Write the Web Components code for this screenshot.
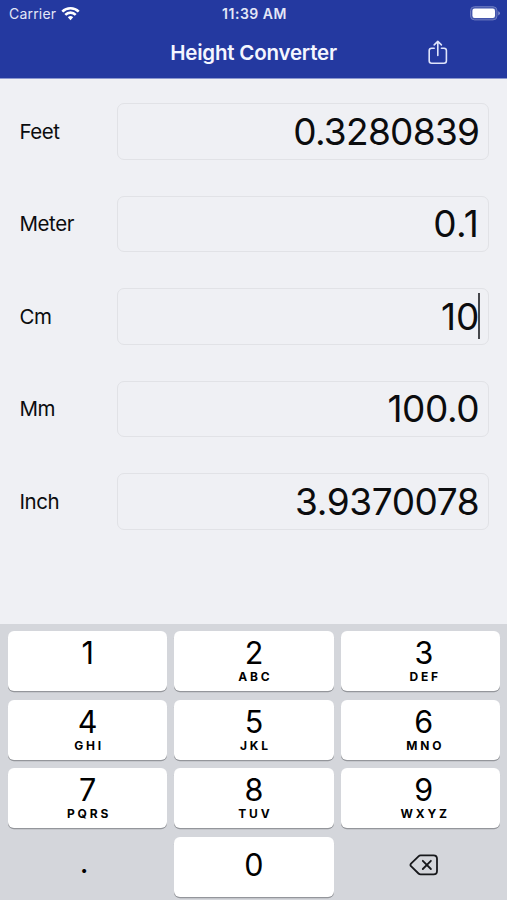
<!DOCTYPE html>
<html lang="en">
<head>
<meta charset="utf-8">
<title>Height Converter</title>
<style>
  body {
    margin: 0;
    font-family: Inter, "Liberation Sans", sans-serif;
    color: #0b0c0e;
  }
</style>
</head>
<body>
<converter-app></converter-app>

<script>
class StatusBar extends HTMLElement {
  constructor() {
    super();
    this.attachShadow({ mode: "open" });
    this.shadowRoot.innerHTML = /*html*/ `
      <style>
        :host {
          display: grid;
          grid-template-columns: 1fr auto 1fr;
          align-items: center;
          height: 27px;
          padding: 0 7px 0 9px;
          font-size: 14px;
          color: #e3e7f7;
        }
        .carrier {
          display: flex;
          align-items: center;
          gap: 5px;
          letter-spacing: 0.2px;
        }
        .time {
          font-size: 14px;
          font-weight: 600;
          letter-spacing: 0.5px;
        }
        .battery { justify-self: end; }
        svg { display: block; }
      </style>
      <div class="carrier">
        <span>Carrier</span>
        <svg width="19" height="15" viewBox="0 0 19 15" fill="none" stroke="#fff" stroke-width="2.6">
          <path d="M1.3 5.6a11.6 11.6 0 0 1 16.4 0"/>
          <path d="M4.3 8.8a7.4 7.4 0 0 1 10.4 0"/>
          <path d="M9.5 14.2l-2.7-2.9a4 4 0 0 1 5.4 0z" fill="#fff" stroke="none"/>
        </svg>
      </div>
      <div class="time"><slot></slot></div>
      <svg class="battery" width="30" height="15" viewBox="0 0 30 15">
        <rect x=".5" y=".7" width="26.5" height="13.2" rx="4" fill="#4355ac" stroke="#6d7bc0"/>
        <rect x="2.4" y="2.6" width="22.6" height="9.4" rx="2.2" fill="#fff"/>
        <path d="M28.3 5.2q1.5.6 1.5 2.1t-1.5 2.1z" fill="#8e99d0"/>
      </svg>
    `;
  }
}

class NavBar extends HTMLElement {
  constructor() {
    super();
    this.attachShadow({ mode: "open" });
    this.shadowRoot.innerHTML = /*html*/ `
      <style>
        :host {
          display: grid;
          grid-template-columns: 1fr auto 1fr;
          align-items: center;
          height: 51px;
          border-bottom: 1px solid #8b97cf;
          color: #f4f6ff;
        }
        h1 {
          grid-column: 2;
          margin: 0;
          font-size: 20.5px;
          font-weight: 600;
          letter-spacing: -0.2px;
        }
        svg {
          display: block;
          justify-self: end;
          margin-right: 59px;
        }
      </style>
      <h1><slot></slot></h1>
      <svg width="20" height="25" viewBox="0 0 20 25" fill="none" stroke="#dfe4fb" stroke-width="1.6" stroke-linecap="round" stroke-linejoin="round">
        <path d="M6.2 8.2H3.6Q1.2 8.2 1.2 10.6V20.8Q1.2 23.2 3.6 23.2H16Q18.4 23.2 18.4 20.8V10.6Q18.4 8.2 16 8.2H13.4"/>
        <path d="M9.8 15.4V1.6M6.2 4.9L9.8 1.4L13.4 4.9"/>
      </svg>
    `;
  }
}

class UnitField extends HTMLElement {
  constructor() {
    super();
    this.attachShadow({ mode: "open" });
    this.shadowRoot.innerHTML = /*html*/ `
      <style>
        :host {
          display: grid;
          grid-template-columns: 97.5px 1fr;
          align-items: center;
          height: 56.5px;
        }
        .label {
          font-size: 20.5px;
          letter-spacing: -0.45px;
        }
        .box {
          display: flex;
          align-items: center;
          justify-content: flex-end;
          box-sizing: border-box;
          height: 56.5px;
          padding-right: 8.7px;
          border: 1px solid #e1e2e6;
          border-radius: 7px;
          background: #eff0f4;
          font-size: 37px;
          letter-spacing: var(--tracking, 0);
        }
        .value { position: relative; }
        :host([active]) .value::after {
          content: "";
          position: absolute;
          right: -0.7px;
          top: -1px;
          width: 2px;
          height: 46px;
          background: #45474b;
        }
      </style>
      <div class="label"></div>
      <div class="box"><span class="value"><slot></slot></span></div>
    `;
    this.$label = this.shadowRoot.querySelector(".label");
  }

  static get observedAttributes() {
    return ["label"];
  }

  attributeChangedCallback(attrName, oldValue, newValue) {
    this.$label.textContent = newValue;
  }
}

class PadKey extends HTMLElement {
  constructor() {
    super();
    this.attachShadow({ mode: "open" });
    this.shadowRoot.innerHTML = /*html*/ `
      <style>
        :host {
          display: flex;
          flex-direction: column;
          align-items: center;
          box-sizing: border-box;
          height: 60px;
          padding-top: 5px;
          border-radius: 6px;
          background: #fff;
          box-shadow: 0 1.3px 0 #94969b;
          color: #000;
        }
        :host([plain]) {
          background: none;
          box-shadow: none;
        }
        :host([single]) {
          justify-content: center;
          padding: 0 0 3px;
        }
        .digit {
          font-size: 30.5px;
          line-height: 34px;
        }
        .letters {
          font-size: 12px;
          line-height: 14px;
          font-weight: 700;
          letter-spacing: 2.8px;
          margin-right: -2.8px;
        }
      </style>
      <div class="digit"><slot></slot></div>
      <div class="letters"></div>
    `;
    this.$letters = this.shadowRoot.querySelector(".letters");
  }

  static get observedAttributes() {
    return ["letters"];
  }

  attributeChangedCallback(attrName, oldValue, newValue) {
    this.$letters.textContent = newValue;
  }
}

class NumberPad extends HTMLElement {
  constructor() {
    super();
    this.attachShadow({ mode: "open" });
    this.shadowRoot.innerHTML = /*html*/ `
      <style>
        :host {
          display: grid;
          grid-template-columns: repeat(3, 1fr);
          grid-auto-rows: 60px;
          gap: 8.6px 7px;
          box-sizing: border-box;
          height: 276px;
          padding: 7px 7px 0 8px;
          background: #d4d6db;
        }
        /* the last column is set a little right of centre */
        pad-key:nth-of-type(3n) { padding-left: 7px; }
        .dot {
          padding: 0 7px 10px 0;
        }
        svg { display: block; }
      </style>
      <pad-key>1</pad-key>
      <pad-key letters="ABC">2</pad-key>
      <pad-key letters="DEF">3</pad-key>
      <pad-key letters="GHI">4</pad-key>
      <pad-key letters="JKL">5</pad-key>
      <pad-key letters="MNO">6</pad-key>
      <pad-key letters="PQRS">7</pad-key>
      <pad-key letters="TUV">8</pad-key>
      <pad-key letters="WXYZ">9</pad-key>
      <pad-key class="dot" plain single>.</pad-key>
      <pad-key single>0</pad-key>
      <pad-key plain single>
        <svg width="30" height="22" viewBox="0 0 30 22" fill="none" stroke="#17181b" stroke-width="1.8" stroke-linecap="round" stroke-linejoin="round">
          <path d="M11.6 1.4H24.6Q28 1.4 28 4.8V17Q28 20.4 24.6 20.4H11.6Q10.4 20.4 9.5 19.5L2 12.2Q.9 10.9 2 9.6L9.5 2.3Q10.4 1.4 11.6 1.4Z"/>
          <path d="M13.8 6.8L21.9 15M21.9 6.8L13.8 15"/>
        </svg>
      </pad-key>
    `;
  }
}

class ConverterApp extends HTMLElement {
  constructor() {
    super();
    this.attachShadow({ mode: "open" });
    this.shadowRoot.innerHTML = /*html*/ `
      <style>
        :host {
          display: flex;
          flex-direction: column;
          width: 507px;
          height: 900px;
          overflow: hidden;
          background: #eff0f4;
        }
        header { background: #2439a0; }
        main {
          flex: 1;
          display: flex;
          flex-direction: column;
          gap: 36px;
          padding: 24px 18px 0 19.5px;
        }
        .long { --tracking: -0.7px; }
        .medium { --tracking: -0.4px; }
        .short { --tracking: 0.4px; }
      </style>
      <header>
        <status-bar>11:39 AM</status-bar>
        <nav-bar>Height Converter</nav-bar>
      </header>
      <main>
        <unit-field class="long" label="Feet">0.3280839</unit-field>
        <unit-field class="short" label="Meter">0.1</unit-field>
        <unit-field label="Cm" active>10</unit-field>
        <unit-field class="medium" label="Mm">100.0</unit-field>
        <unit-field class="medium" label="Inch">3.9370078</unit-field>
      </main>
      <number-pad></number-pad>
    `;
  }
}

window.customElements.define("status-bar", StatusBar);
window.customElements.define("nav-bar", NavBar);
window.customElements.define("unit-field", UnitField);
window.customElements.define("pad-key", PadKey);
window.customElements.define("number-pad", NumberPad);
window.customElements.define("converter-app", ConverterApp);
</script>
</body>
</html>
